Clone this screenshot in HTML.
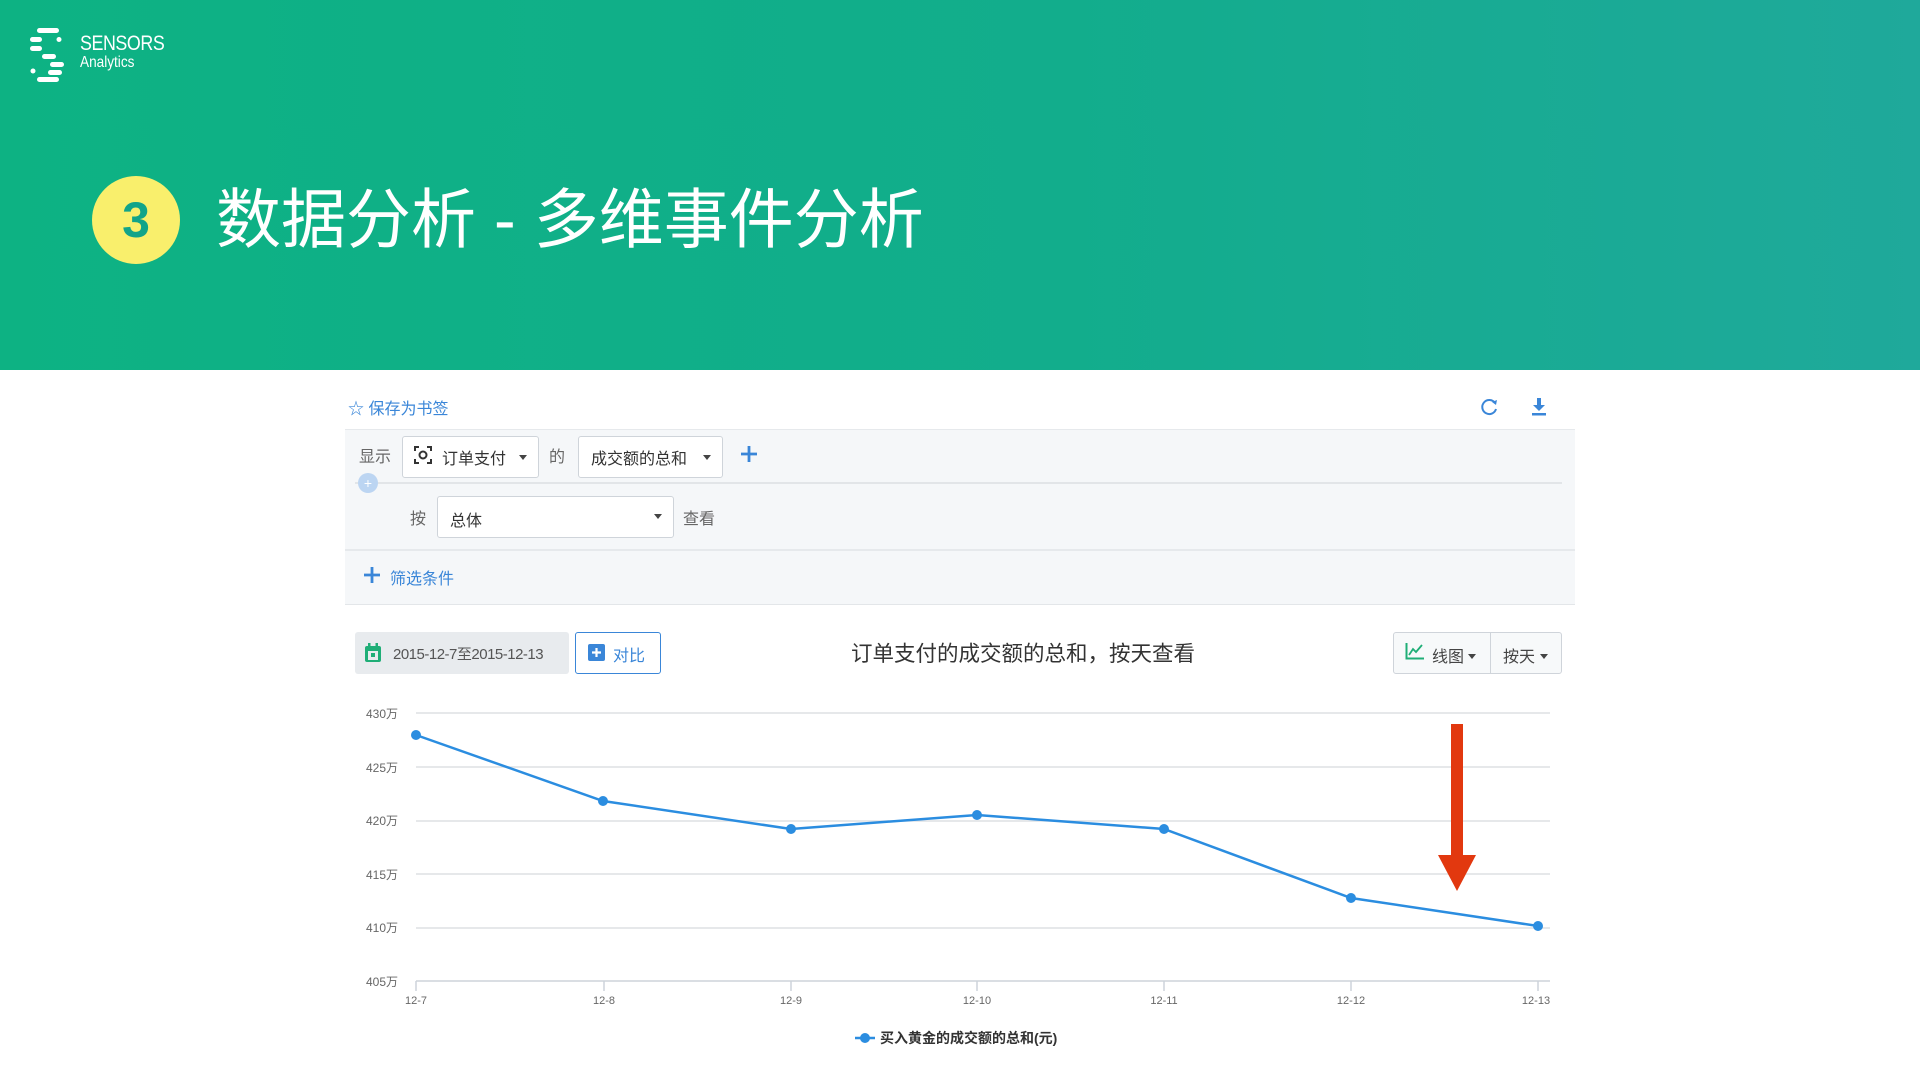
<!DOCTYPE html>
<html><head><meta charset="utf-8"><style>
*{margin:0;padding:0;box-sizing:border-box}
body{width:1920px;height:1080px;position:relative;background:#fff;font-family:"Liberation Sans","Noto Sans CJK SC",sans-serif;overflow:hidden}
.hdr{position:absolute;left:0;top:0;width:1920px;height:370px;background:linear-gradient(90deg,#0db283 0%,#12ad8c 55%,#1fa99b 100%)}
.a{position:absolute;white-space:nowrap}
.sel{position:absolute;border:1px solid #cfd4da;border-radius:3px;background:#fff;font-size:16px;color:#333}
.caret{position:absolute;width:0;height:0;border-left:4px solid transparent;border-right:4px solid transparent;border-top:5px solid #444}
.grid{stroke:#dde0e4;stroke-width:1.5}
.yl{font-size:12px;fill:#666}
</style></head><body>
<div class="hdr"></div>
<svg class="a" style="left:28px;top:26px" width="45" height="56" viewBox="0 0 45 56">
<g fill="#fff"><rect x="9" y="2" width="22" height="5" rx="2.5"/><rect x="2" y="11" width="12" height="5" rx="2.5"/><circle cx="31" cy="13.5" r="2.5"/><rect x="2" y="20" width="12" height="5" rx="2.5"/><rect x="14" y="28" width="14" height="5" rx="2.5"/><rect x="22" y="36" width="14" height="5" rx="2.5"/><circle cx="5" cy="45" r="2.5"/><rect x="20" y="44" width="14" height="5" rx="2.5"/><rect x="9" y="51" width="22" height="5" rx="2.5"/></g></svg>
<div class="a" style="left:80px;top:32px;color:#fff;font-size:21px;letter-spacing:-0.5px;transform:scaleX(0.85);transform-origin:left">SENSORS</div>
<div class="a" style="left:80px;top:54px;color:#fff;font-size:16px;transform:scaleX(0.85);transform-origin:left">Analytics</div>
<div class="a" style="left:92px;top:176px;width:88px;height:88px;border-radius:50%;background:#f9ef6c;color:#12a489;font-size:50px;font-weight:bold;text-align:center;line-height:88px">3</div>
<div class="a" style="left:216px;top:180px;color:#fff;font-size:65px;line-height:80px">数据分析 - 多维事件分析</div>

<div class="a" style="left:348px;top:395px;color:#3a86d8;font-size:16px">☆ 保存为书签</div>
<svg class="a" style="left:1480px;top:397px" width="20" height="20" viewBox="0 0 20 20"><path d="M15 6A7 7 0 1 0 16 12" fill="none" stroke="#3a86d8" stroke-width="2"/><path d="M12 5L17 3L16 8Z" fill="#3a86d8"/></svg>
<svg class="a" style="left:1529px;top:397px" width="20" height="20" viewBox="0 0 20 20"><rect x="8" y="1" width="4" height="8" fill="#3a86d8"/><path d="M4 8H16L10 14Z" fill="#3a86d8"/><rect x="3" y="16" width="14" height="2.5" fill="#3a86d8"/></svg>

<div class="a" style="left:345px;top:429px;width:1230px;height:176px;background:#f5f7f9;border-top:1px solid #e6e9ec;border-bottom:1px solid #e3e6e9"></div>
<div class="a" style="left:355px;top:482px;width:1207px;height:2px;background:#e2e5e8"></div>
<div class="a" style="left:345px;top:549px;width:1230px;height:2px;background:#e6e9ec"></div>
<div class="a" style="left:358px;top:473px;width:20px;height:20px;border-radius:50%;background:#bcd5f2;color:#fff;font-size:14px;text-align:center;line-height:20px">+</div>
<div class="a" style="left:359px;top:443px;font-size:16px;color:#666">显示</div>
<div class="sel" style="left:402px;top:436px;width:137px;height:42px"></div>
<svg class="a" style="left:413px;top:445px" width="20" height="20" viewBox="0 0 20 20"><path d="M2 6V2H6M14 2H18V6M18 14V18H14M6 18H2V14" fill="none" stroke="#333" stroke-width="2"/><circle cx="10" cy="10" r="3.5" fill="none" stroke="#333" stroke-width="2"/></svg>
<div class="a" style="left:442px;top:445px;font-size:16px;color:#333">订单支付</div>
<div class="caret" style="left:519px;top:455px"></div>
<div class="a" style="left:549px;top:443px;font-size:16px;color:#666">的</div>
<div class="sel" style="left:578px;top:436px;width:145px;height:42px"></div>
<div class="a" style="left:591px;top:445px;font-size:16px;color:#333">成交额的总和</div>
<div class="caret" style="left:703px;top:455px"></div>
<svg class="a" style="left:740px;top:445px" width="18" height="18"><path d="M9 1V17M1 9H17" stroke="#3a86d8" stroke-width="2.8"/></svg>
<div class="a" style="left:410px;top:505px;font-size:16px;color:#666">按</div>
<div class="sel" style="left:437px;top:496px;width:237px;height:42px"></div>
<div class="a" style="left:450px;top:507px;font-size:16px;color:#333">总体</div>
<div class="caret" style="left:654px;top:514px"></div>
<div class="a" style="left:683px;top:505px;font-size:16px;color:#666">查看</div>
<svg class="a" style="left:363px;top:566px" width="18" height="18"><path d="M9 1V17M1 9H17" stroke="#3a86d8" stroke-width="2.8"/></svg>
<div class="a" style="left:390px;top:565px;font-size:16px;color:#3a86d8">筛选条件</div>

<div class="a" style="left:355px;top:632px;width:214px;height:42px;background:#e8ebee;border-radius:3px"></div>
<svg class="a" style="left:364px;top:643px" width="18" height="20" viewBox="0 0 18 20"><rect x="1" y="3" width="16" height="16" rx="2" fill="#1fae77"/><rect x="4" y="8" width="10" height="9" fill="#e8ebee"/><rect x="7" y="10" width="4" height="4" fill="#1fae77"/><rect x="4" y="0" width="2.5" height="5" fill="#1fae77"/><rect x="11.5" y="0" width="2.5" height="5" fill="#1fae77"/></svg>
<div class="a" style="left:393px;top:643px;font-size:15px;color:#555;letter-spacing:-0.5px">2015-12-7至2015-12-13</div>
<div class="a" style="left:575px;top:632px;width:86px;height:42px;border:1.5px solid #3a86d8;border-radius:3px;background:#fff"></div>
<svg class="a" style="left:588px;top:644px" width="17" height="17"><rect width="17" height="17" rx="2" fill="#3a86d8"/><path d="M8.5 4V13M4 8.5H13" stroke="#fff" stroke-width="2.2"/></svg>
<div class="a" style="left:613px;top:642px;font-size:16px;color:#3a86d8">对比</div>
<div class="a" style="left:851px;top:637px;font-size:21.5px;color:#333">订单支付的成交额的总和，按天查看</div>
<div class="a" style="left:1393px;top:632px;width:169px;height:42px;border:1px solid #cfd4da;border-radius:3px;background:#f7f9fa"></div>
<div class="a" style="left:1490px;top:632px;width:1px;height:42px;background:#cfd4da"></div>
<svg class="a" style="left:1405px;top:643px" width="19" height="17"><path d="M1.5 0V15.5H19" fill="none" stroke="#1fae77" stroke-width="2"/><path d="M4 12L8 6L11 9L17 2" fill="none" stroke="#1fae77" stroke-width="1.8"/></svg>
<div class="a" style="left:1432px;top:643px;font-size:16px;color:#444">线图</div>
<div class="caret" style="left:1468px;top:654px"></div>
<div class="a" style="left:1503px;top:643px;font-size:16px;color:#444">按天</div>
<div class="caret" style="left:1540px;top:654px"></div>

<svg class="a" style="left:0;top:0" width="1920" height="1080">
<g class="grid"><line x1="416" y1="713" x2="1550" y2="713"/><line x1="416" y1="767" x2="1550" y2="767"/><line x1="416" y1="821" x2="1550" y2="821"/><line x1="416" y1="874" x2="1550" y2="874"/><line x1="416" y1="928" x2="1550" y2="928"/><line x1="416" y1="981" x2="1550" y2="981" stroke="#cdd3da"/></g>
<g stroke="#cdd3da" stroke-width="1.5"><line x1="416" y1="981" x2="416" y2="991"/><line x1="604" y1="981" x2="604" y2="991"/><line x1="791" y1="981" x2="791" y2="991"/><line x1="977" y1="981" x2="977" y2="991"/><line x1="1164" y1="981" x2="1164" y2="991"/><line x1="1351" y1="981" x2="1351" y2="991"/><line x1="1538" y1="981" x2="1538" y2="991"/></g>
<g class="yl" text-anchor="end"><text x="398" y="718">430万</text><text x="398" y="772">425万</text><text x="398" y="825">420万</text><text x="398" y="879">415万</text><text x="398" y="932">410万</text><text x="398" y="986">405万</text></g>
<g class="yl" text-anchor="middle" style="font-size:11px"><text x="416" y="1004">12-7</text><text x="604" y="1004">12-8</text><text x="791" y="1004">12-9</text><text x="977" y="1004">12-10</text><text x="1164" y="1004">12-11</text><text x="1351" y="1004">12-12</text><text x="1536" y="1004">12-13</text></g>
<polyline points="416,735 603,801 791,829 977,815 1164,829 1351,898 1538,926" fill="none" stroke="#2b8de0" stroke-width="2.5"/>
<g fill="#2b8de0"><circle cx="416" cy="735" r="5"/><circle cx="603" cy="801" r="5"/><circle cx="791" cy="829" r="5"/><circle cx="977" cy="815" r="5"/><circle cx="1164" cy="829" r="5"/><circle cx="1351" cy="898" r="5"/><circle cx="1538" cy="926" r="5"/></g>
<path d="M1451 724H1463V855H1476L1457 891L1438 855H1451Z" fill="#e2380f"/>
<line x1="855" y1="1038" x2="875" y2="1038" stroke="#2b8de0" stroke-width="2.5"/><circle cx="865" cy="1038" r="5" fill="#2b8de0"/>
<text x="880" y="1043" font-size="14" font-weight="bold" fill="#333">买入黄金的成交额的总和(元)</text>
</svg>
</body></html>
